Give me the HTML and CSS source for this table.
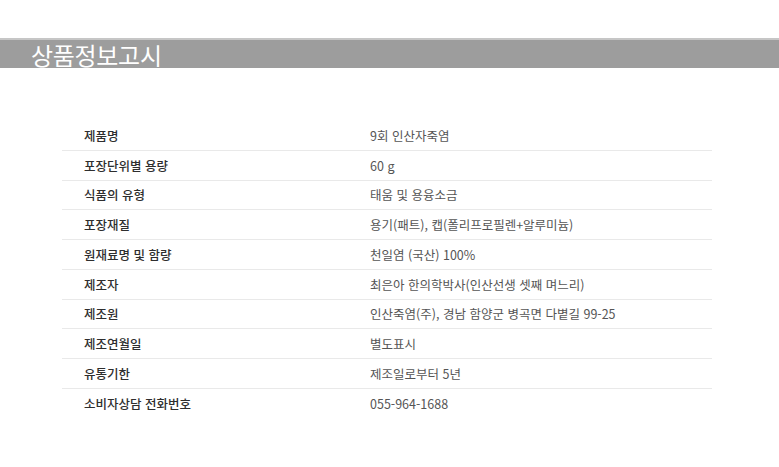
FILE: index.html
```html
<!DOCTYPE html>
<html lang="ko">
<head>
<meta charset="utf-8">
<link rel="stylesheet" href="styles.css">
</head>
<body>
<div class="title-bar"><h1 class="title">상품정보고시</h1></div>
<div class="info">
  <div class="row"><div class="label">제품명</div><div class="value">9회 인산자죽염</div></div>
  <div class="row"><div class="label">포장단위별 용량</div><div class="value">60 g</div></div>
  <div class="row"><div class="label">식품의 유형</div><div class="value">태움 및 용융소금</div></div>
  <div class="row"><div class="label">포장재질</div><div class="value">용기(패트), 캡(폴리프로필렌+알루미늄)</div></div>
  <div class="row"><div class="label">원재료명 및 함량</div><div class="value">천일염 (국산) 100%</div></div>
  <div class="row"><div class="label">제조자</div><div class="value">최은아 한의학박사(인산선생 셋째 며느리)</div></div>
  <div class="row"><div class="label">제조원</div><div class="value">인산죽염(주), 경남 함양군 병곡면 다볕길 99-25</div></div>
  <div class="row"><div class="label">제조연월일</div><div class="value">별도표시</div></div>
  <div class="row"><div class="label">유통기한</div><div class="value">제조일로부터 5년</div></div>
  <div class="row"><div class="label">소비자상담 전화번호</div><div class="value">055-964-1688</div></div>
</div>
</body>
</html>
```
FILE: styles.css
```css
html, body {
  margin: 0;
  padding: 0;
  background: #ffffff;
}
body {
  font-family: "Noto Sans CJK KR", "Noto Sans", sans-serif;
}
.title-bar {
  margin-top: 38px;
  height: 30px;
  box-sizing: border-box;
  background: #9d9d9d;
  border-top: 2px solid #c6c6c6;
  display: flex;
  align-items: center;
}
.title {
  margin: 0 0 0 31px;
  padding-top: 2px;
  font-size: 24px;
  font-weight: 400;
  color: #ffffff;
  line-height: 28px;
  letter-spacing: -0.3px;
}
.info {
  margin: 53px 0 0 62px;
  width: 650px;
}
.row {
  display: flex;
  align-items: center;
  height: 29.75px;
  box-sizing: border-box;
  border-bottom: 1px solid #e9e9e9;
  font-size: 12.5px;
}
.row:last-child {
  border-bottom: none;
}
.label {
  width: 308px;
  padding-left: 22px;
  box-sizing: border-box;
  color: #2e2e2e;
  font-weight: 500;
}
.value {
  color: #555555;
  font-weight: 400;
}
```
